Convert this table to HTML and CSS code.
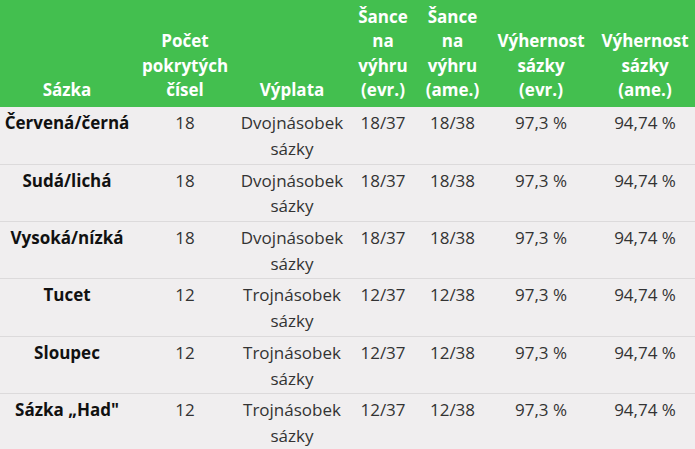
FILE: index.html
```html
<!DOCTYPE html>
<html lang="cs">
<head>
<meta charset="utf-8">
<link rel="stylesheet" href="styles.css">
</head>
<body>
<table class="bets">
<colgroup>
<col class="c1"><col class="c2"><col class="c3"><col class="c4"><col class="c5"><col class="c6"><col class="c7">
</colgroup>
<thead>
<tr>
<th>Sázka</th>
<th>Počet pokrytých čísel</th>
<th>Výplata</th>
<th>Šance na výhru (evr.)</th>
<th>Šance na výhru (ame.)</th>
<th class="tight">Výhernost sázky (evr.)</th>
<th>Výhernost sázky (ame.)</th>
</tr>
</thead>
<tbody>
<tr><td class="name">Červená/černá</td><td>18</td><td>Dvojnásobek sázky</td><td>18/37</td><td>18/38</td><td>97,3 %</td><td>94,74 %</td></tr>
<tr><td class="name">Sudá/lichá</td><td>18</td><td>Dvojnásobek sázky</td><td>18/37</td><td>18/38</td><td>97,3 %</td><td>94,74 %</td></tr>
<tr><td class="name">Vysoká/nízká</td><td>18</td><td>Dvojnásobek sázky</td><td>18/37</td><td>18/38</td><td>97,3 %</td><td>94,74 %</td></tr>
<tr><td class="name">Tucet</td><td>12</td><td>Trojnásobek sázky</td><td>12/37</td><td>12/38</td><td>97,3 %</td><td>94,74 %</td></tr>
<tr><td class="name">Sloupec</td><td>12</td><td>Trojnásobek sázky</td><td>12/37</td><td>12/38</td><td>97,3 %</td><td>94,74 %</td></tr>
<tr><td class="name">Sázka „Had"</td><td>12</td><td>Trojnásobek sázky</td><td>12/37</td><td>12/38</td><td>97,3 %</td><td>94,74 %</td></tr>
</tbody>
</table>
</body>
</html>
```
FILE: styles.css
```css
html, body {
  margin: 0;
  padding: 0;
  background: #f0eeef;
}
body {
  font-family: "Open Sans", "Liberation Sans", sans-serif;
  font-size: 17px;
  line-height: 25.7px;
  color: #333;
}
.bets {
  width: 695px;
  border-collapse: collapse;
  table-layout: fixed;
}
.c1 { width: 134px; }
.c2 { width: 102px; }
.c3 { width: 112px; }
.c4 { width: 70px; }
.c5 { width: 69px; }
.c6 { width: 108px; }
.c7 { width: 100px; }
.bets thead th {
  background: #43bf4f;
  color: #fff;
  font-weight: 700;
  line-height: 24.3px;
  vertical-align: bottom;
  text-align: center;
  padding: 5px 1px 5px;
}
.bets thead th.tight {
  padding-left: 10px;
  padding-right: 10px;
}
.bets tbody td {
  text-align: center;
  vertical-align: top;
  padding: 3px 1px 2px;
  border-bottom: 1px solid #dcdadb;
}
.bets tbody tr:last-child td {
  border-bottom: none;
}
.bets td.name {
  font-weight: 700;
  color: #111;
}
```
